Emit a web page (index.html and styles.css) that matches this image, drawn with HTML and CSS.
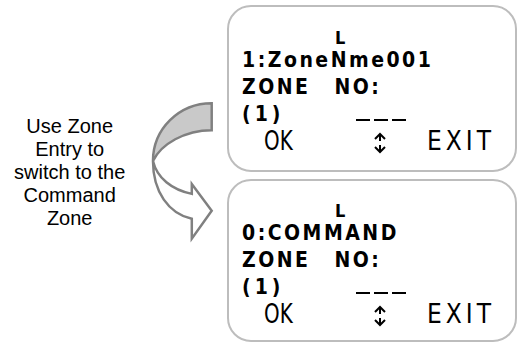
FILE: index.html
```html
<!DOCTYPE html>
<html lang="en">

<head>
    <meta charset="UTF-8">
    <title>Zone Entry</title>
    <link rel="stylesheet" href="styles.css">
</head>

<body>
    <div class="side">
        <p class="caption">Use Zone<br>Entry to<br>switch to the<br>Command<br>Zone</p>
        <svg class="curve" width="80" height="160" viewBox="0 0 80 160">
            <!-- back part of the curved arrow -->
            <path class="back" d="M65,11 C32,11 6,37 6,69 C14,52 38,38 65,38 Z" />
            <!-- front part with the head -->
            <path class="front" d="M6,69 C6,100 22,122 45,127 L45,147 L65,119 L45,92 L45,102 C25,98 10,86 6,69 Z" />
        </svg>
    </div>
    <div class="screens">
        <section class="lcd lcd-top">
            <div class="lcd-mark">L</div>
            <div class="lcd-line">1:ZoneNme001</div>
            <div class="lcd-line">ZONE<span class="gap"></span>NO:</div>
            <div class="lcd-line lcd-entry">
                <span>(1)</span>
                <span class="dashes"><i></i><i></i><i></i></span>
            </div>
            <div class="lcd-keys">
                <span class="key-ok">OK</span>
                <svg class="updown" width="14" height="22" viewBox="0 0 14 22">
                    <path d="M2,7 L7,2 L12,7 M7,2 L7,9 M2,15 L7,20 L12,15 M7,20 L7,13" />
                </svg>
                <span class="key-exit">EXIT</span>
            </div>
        </section>
        <section class="lcd lcd-bottom">
            <div class="lcd-mark">L</div>
            <div class="lcd-line">0:COMMAND</div>
            <div class="lcd-line">ZONE<span class="gap"></span>NO:</div>
            <div class="lcd-line lcd-entry">
                <span>(1)</span>
                <span class="dashes"><i></i><i></i><i></i></span>
            </div>
            <div class="lcd-keys">
                <span class="key-ok">OK</span>
                <svg class="updown" width="14" height="22" viewBox="0 0 14 22">
                    <path d="M2,7 L7,2 L12,7 M7,2 L7,9 M2,15 L7,20 L12,15 M7,20 L7,13" />
                </svg>
                <span class="key-exit">EXIT</span>
            </div>
        </section>
    </div>
</body>

</html>
```

FILE: styles.css
```css
body {
    margin: 0;
    width: 524px;
    height: 344px;
    display: flex;
    background-color: #fff;
    color: #000;
    overflow: hidden;
}

.side {
    width: 227px;
    display: flex;
    align-items: center;
}

.caption {
    width: 140px;
    margin: 0;
    text-align: center;
    font-family: "Liberation Sans", Arial, sans-serif;
    font-size: 20px;
    line-height: 23px;
}

.curve {
    margin-left: 8px;
}

.curve path {
    stroke: #808080;
    stroke-width: 2.5;
    stroke-linejoin: miter;
}

.curve .back {
    fill: #c9c9c9;
}

.curve .front {
    fill: #fff;
}

.screens {
    display: flex;
    flex-direction: column;
    gap: 7px;
    padding-top: 5px;
}

.lcd {
    width: 290px;
    box-sizing: border-box;
    border: 2px solid #bdbdbd;
    border-radius: 24px;
    padding: 21px 13px 0 13px;
    font-family: "DejaVu Sans", sans-serif;
    font-stretch: condensed;
    font-weight: bold;
}

.lcd-top {
    height: 167px;
}

.lcd-bottom {
    height: 163px;
    padding-top: 20px;
}

.lcd-mark {
    font-size: 18px;
    line-height: 19px;
    padding-left: 93px;
}

.lcd-line {
    font-size: 21px;
    line-height: 27px;
    letter-spacing: 2.5px;
    white-space: nowrap;
}

.gap {
    display: inline-block;
    width: 24px;
}

.lcd-entry {
    display: flex;
    align-items: flex-end;
}

.lcd-entry span:first-child {
    letter-spacing: 4px;
}

.dashes {
    display: flex;
    gap: 4px;
    margin-left: 72px;
    margin-bottom: 7px;
}

.dashes i {
    width: 14px;
    height: 2px;
    background-color: #000;
}

.lcd-keys {
    display: flex;
    align-items: center;
    height: 26px;
    font-family: "DejaVu Sans", sans-serif;
    font-weight: normal;
    font-size: 26px;
    line-height: 26px;
}

.key-ok {
    margin-left: 22px;
    width: 30px;
    flex-shrink: 0;
    transform: scaleX(0.85);
    transform-origin: left center;
}

.updown {
    flex-shrink: 0;
    margin-left: 79px;
    margin-top: 4px;
}

.updown path {
    fill: none;
    stroke: #000;
    stroke-width: 2;
}

.key-exit {
    margin-left: 40px;
    letter-spacing: 4px;
    flex-shrink: 0;
}
```
